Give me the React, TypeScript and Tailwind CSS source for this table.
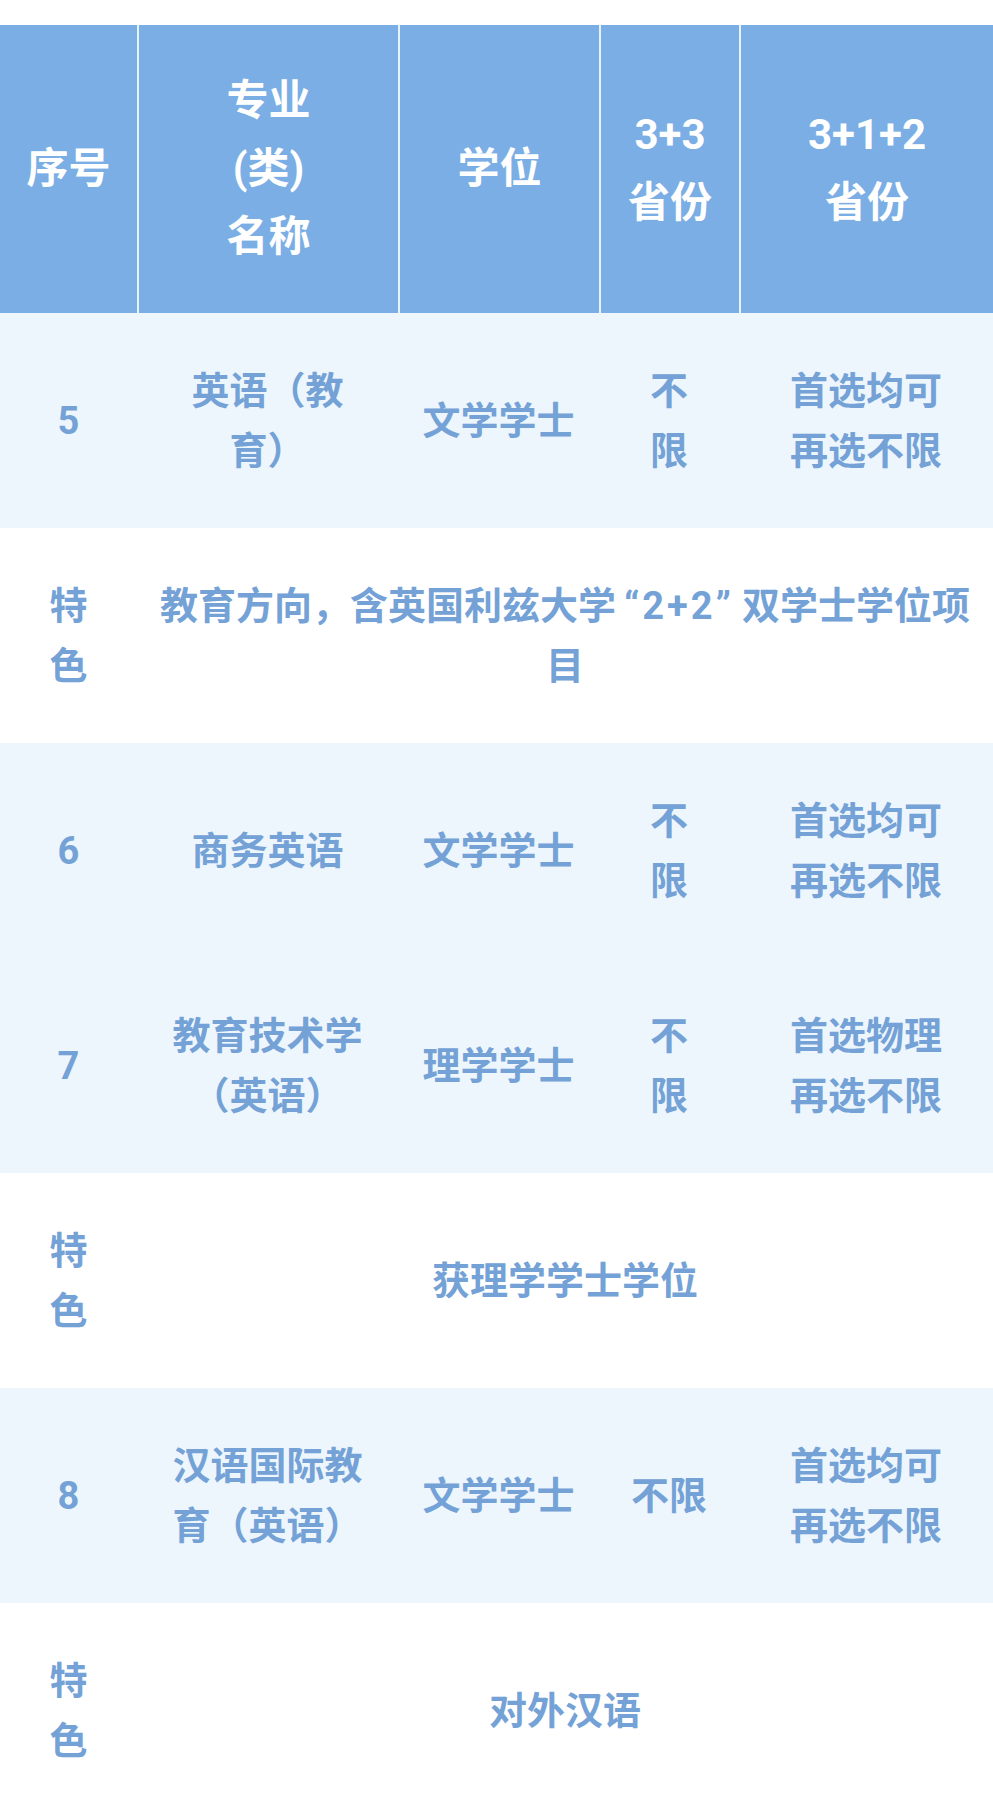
import React from 'react';

type Row = {
  kind: 'major';
  no: string;
  name: string[];
  degree: string[];
  p33: string[];
  p312: string[];
};

type Feature = {
  kind: 'feature';
  text: React.ReactNode;
};

const rows: (Row | Feature)[] = [
  {
    kind: 'major',
    no: '5',
    name: ['英语（教', '育）'],
    degree: ['文学学士'],
    p33: ['不', '限'],
    p312: ['首选均可', '再选不限'],
  },
  {
    kind: 'feature',
    text: (
      <>
        教育方向，含英国利兹大学
        <span className="inline-block px-[8px] tracking-[3px]">“2+2”</span>
        双学士学位项目
      </>
    ),
  },
  {
    kind: 'major',
    no: '6',
    name: ['商务英语'],
    degree: ['文学学士'],
    p33: ['不', '限'],
    p312: ['首选均可', '再选不限'],
  },
  {
    kind: 'major',
    no: '7',
    name: ['教育技术学', '（英语）'],
    degree: ['理学学士'],
    p33: ['不', '限'],
    p312: ['首选物理', '再选不限'],
  },
  { kind: 'feature', text: '获理学学士学位' },
  {
    kind: 'major',
    no: '8',
    name: ['汉语国际教', '育（英语）'],
    degree: ['文学学士'],
    p33: ['不限'],
    p312: ['首选均可', '再选不限'],
  },
  { kind: 'feature', text: '对外汉语' },
];

const Lines: React.FC<{ lines: string[] }> = ({ lines }) => (
  <>
    {lines.map((l, i) => (
      <div key={i}>{l}</div>
    ))}
  </>
);

const cell = 'flex flex-col items-center justify-center text-center py-[47.5px]';

const App: React.FC = () => {
  const headers = [
    ['序号'],
    ['专业', '(类)', '名称'],
    ['学位'],
    ['3+3', '省份'],
    ['3+1+2', '省份'],
  ];

  return (
    <div
      className="w-[993px] min-h-[1804px] bg-white pt-[25px] overflow-hidden"
      style={{ fontFamily: 'Roboto, "Noto Sans CJK SC", sans-serif' }}
    >
      <div className="grid grid-cols-[137px_261px_201px_140px_1fr] bg-[#7aaee4] text-white font-bold text-[42px] leading-[68px]">
        {headers.map((h, i) => (
          <div
            key={i}
            className={`flex flex-col items-center justify-center text-center h-[288px] ${
              i > 0 ? 'border-l-2 border-[#e4f3fd]' : ''
            }`}
          >
            <Lines lines={h} />
          </div>
        ))}
      </div>

      <div className="text-[#74a2d6] font-bold text-[38px] leading-[60px]">
        {rows.map((r, i) =>
          r.kind === 'major' ? (
            <div
              key={i}
              className="grid grid-cols-[137px_261px_201px_140px_1fr] bg-[#eef6fd]"
            >
              <div className={cell}>{r.no}</div>
              <div className={cell}>
                <Lines lines={r.name} />
              </div>
              <div className={cell}>
                <Lines lines={r.degree} />
              </div>
              <div className={cell}>
                <Lines lines={r.p33} />
              </div>
              <div className={cell}>
                <Lines lines={r.p312} />
              </div>
            </div>
          ) : (
            <div key={i} className="grid grid-cols-[137px_1fr] bg-white">
              <div className={cell}>
                <div>特</div>
                <div>色</div>
              </div>
              <div className={`${cell} px-[10px]`}>
                <p>{r.text}</p>
              </div>
            </div>
          )
        )}
      </div>
    </div>
  );
};

export default App;
